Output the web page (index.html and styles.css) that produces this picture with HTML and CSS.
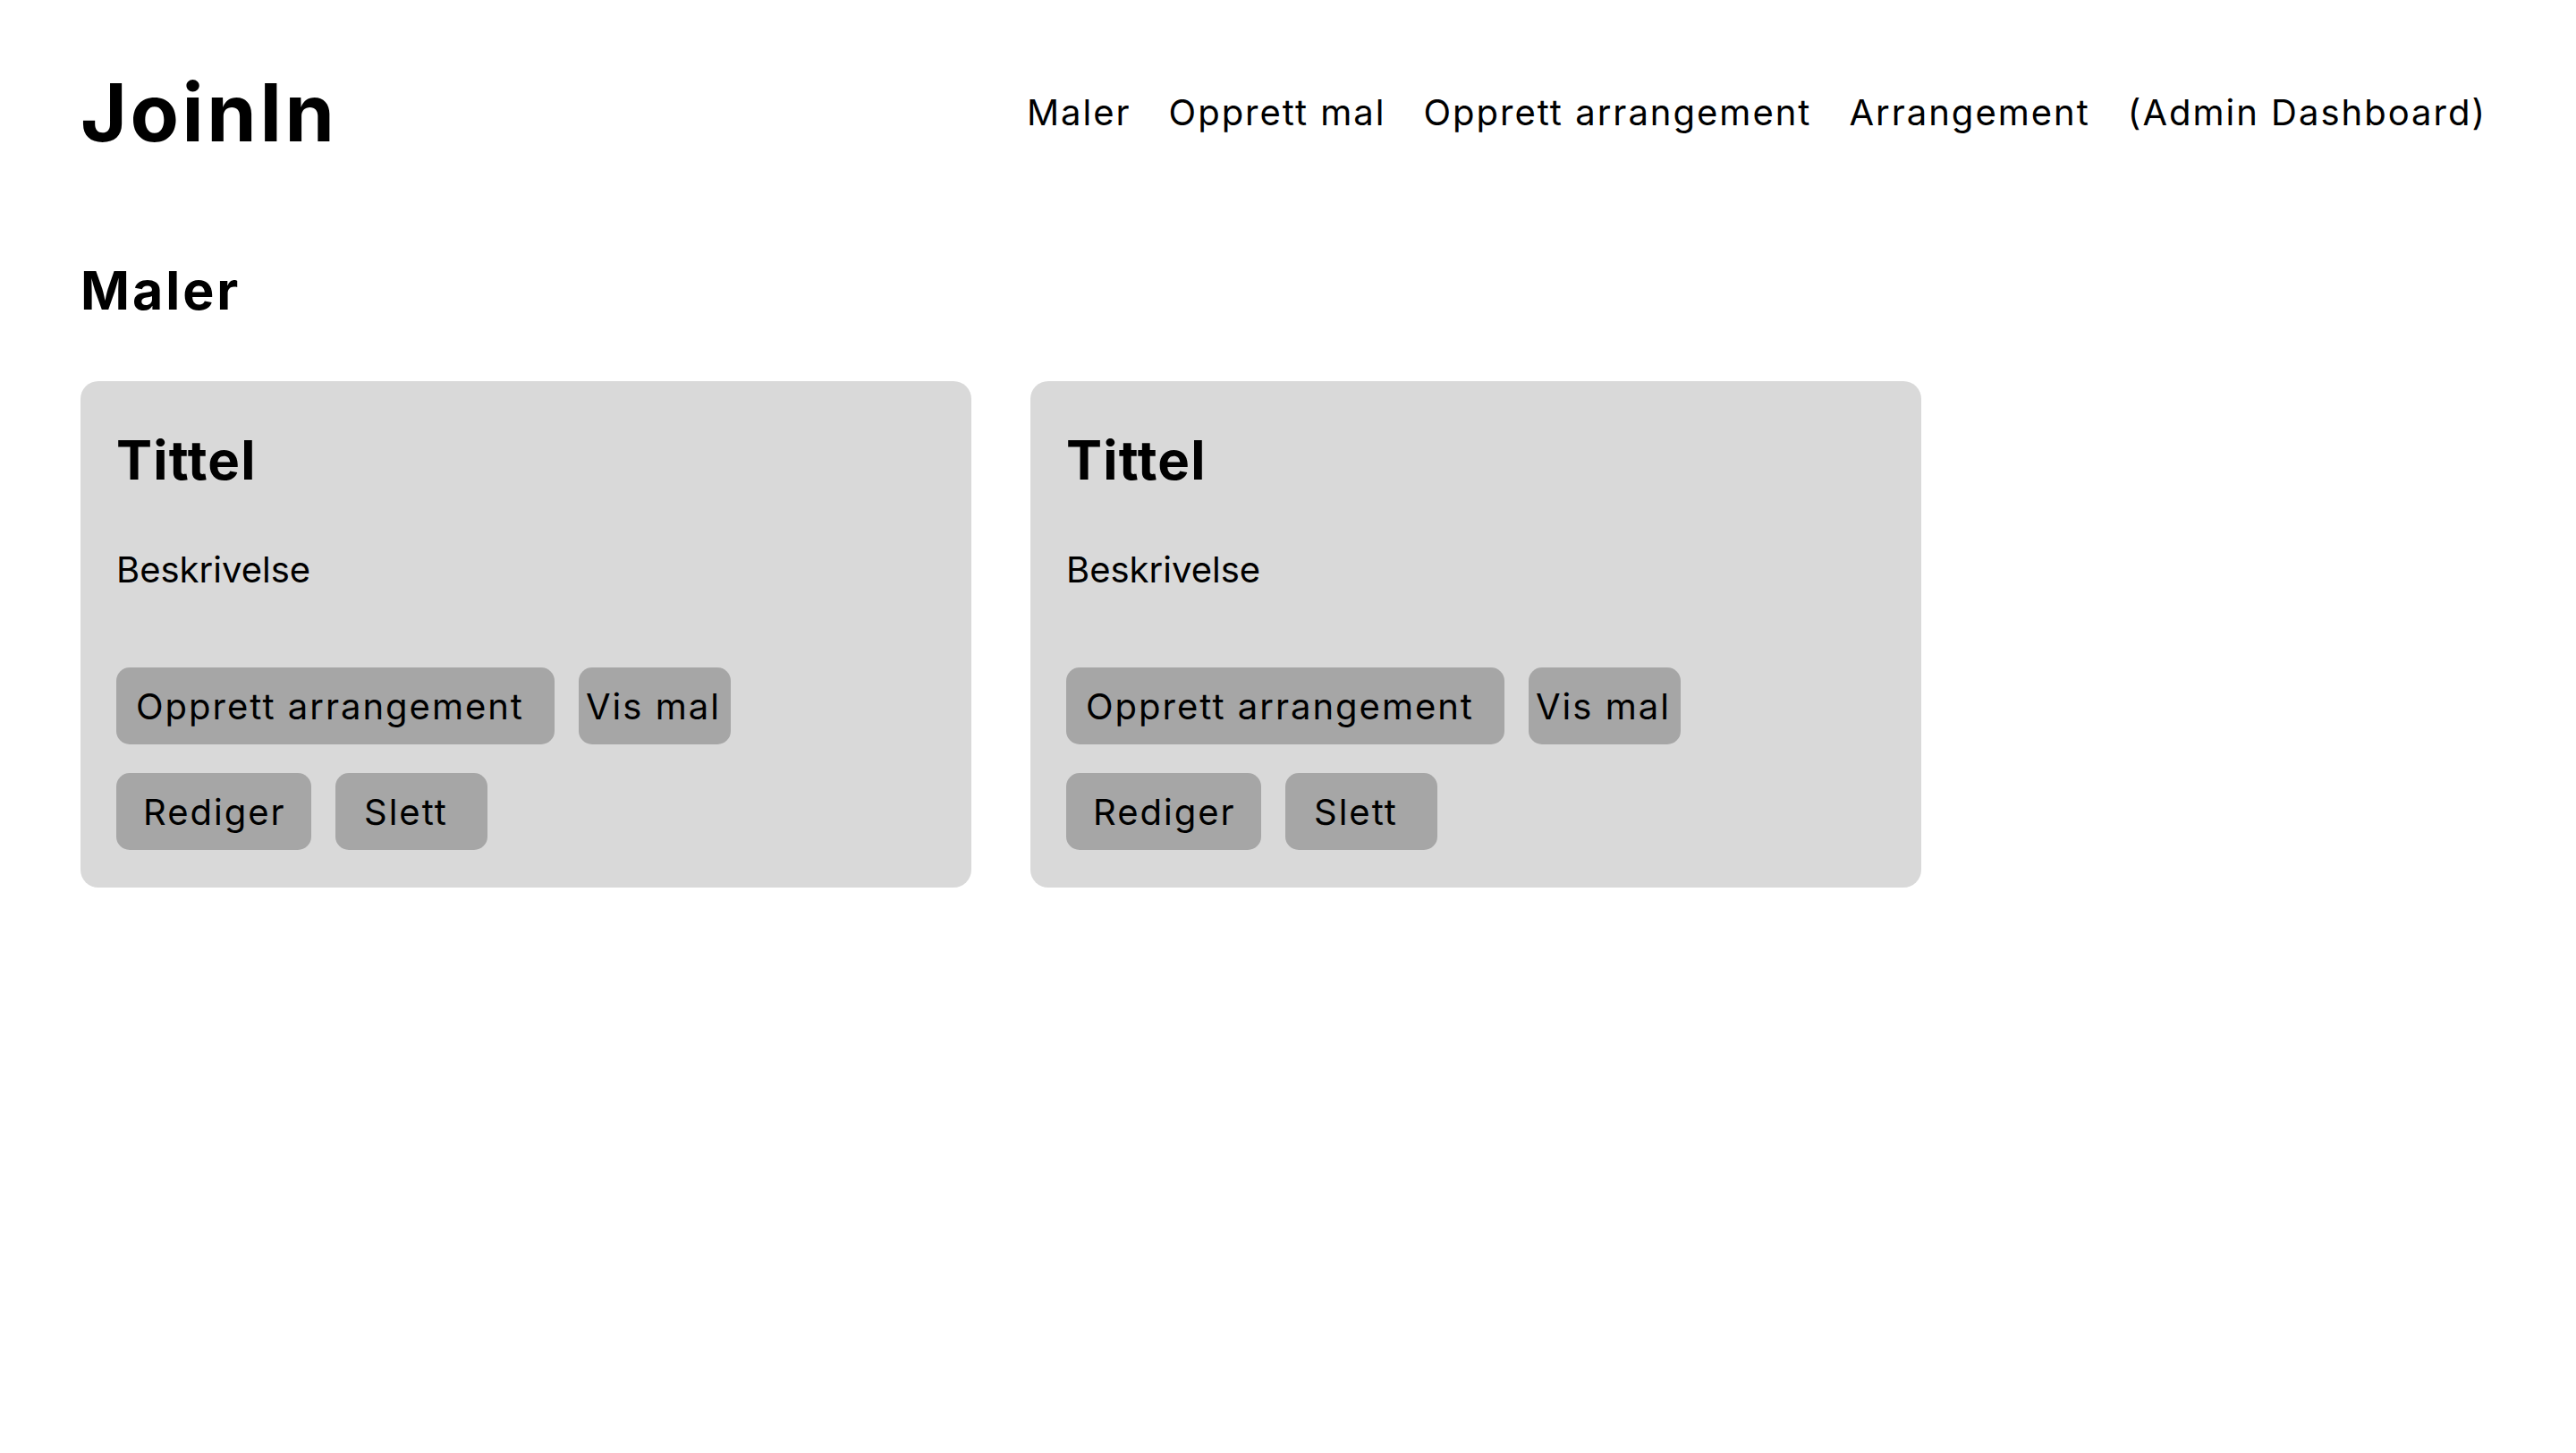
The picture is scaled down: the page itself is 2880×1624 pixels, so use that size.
FILE: index.html
```html
<!DOCTYPE html>
<html lang="no">
<head>
<meta charset="utf-8">
<title>JoinIn – Maler</title>
<link rel="stylesheet" href="styles.css">
</head>
<body>
<header class="header">
  <div class="logo">JoinIn</div>
  <nav class="nav">
    <a class="nav-link" href="#">Maler</a>
    <a class="nav-link" href="#">Opprett mal</a>
    <a class="nav-link" href="#">Opprett arrangement</a>
    <a class="nav-link" href="#">Arrangement</a>
    <a class="nav-link" href="#">(Admin Dashboard)</a>
  </nav>
</header>
<main class="main">
  <h1 class="page-title">Maler</h1>
  <div class="cards">
    <section class="card">
      <h2 class="card-title">Tittel</h2>
      <p class="card-desc">Beskrivelse</p>
      <div class="actions">
        <button class="btn btn-create">Opprett arrangement</button>
        <button class="btn btn-view">Vis mal</button>
        <button class="btn btn-edit">Rediger</button>
        <button class="btn btn-delete">Slett</button>
      </div>
    </section>
    <section class="card">
      <h2 class="card-title">Tittel</h2>
      <p class="card-desc">Beskrivelse</p>
      <div class="actions">
        <button class="btn btn-create">Opprett arrangement</button>
        <button class="btn btn-view">Vis mal</button>
        <button class="btn btn-edit">Rediger</button>
        <button class="btn btn-delete">Slett</button>
      </div>
    </section>
  </div>
</main>
</body>
</html>
```
FILE: styles.css
```css
* { box-sizing: border-box; }

html, body {
  margin: 0;
  background: #ffffff;
  color: #000000;
  font-family: Inter, "Noto Sans", sans-serif;
}

.header {
  display: flex;
  align-items: center;
  justify-content: space-between;
  padding: 81px 100px 0 90px;
}

.logo {
  font-size: 89px;
  line-height: 1;
  font-weight: 700;
  letter-spacing: 3.5px;
}

.nav {
  display: flex;
  align-items: center;
  gap: 42px;
}

.nav-link {
  color: #000000;
  text-decoration: none;
  font-size: 40px;
  line-height: 1;
  letter-spacing: 0.05em;
}

.main {
  padding: 125px 90px 0 90px;
}

.page-title {
  margin: 0;
  font-size: 59px;
  line-height: 1;
  font-weight: 700;
  letter-spacing: 3px;
}

.cards {
  display: flex;
  gap: 66px;
  margin-top: 72px;
}

.card {
  width: 996px;
  background: #d9d9d9;
  border-radius: 20px;
  padding: 58px 40px 42px 40px;
}

.card-title {
  margin: 0;
  font-size: 60px;
  line-height: 1;
  font-weight: 700;
  letter-spacing: 1.2px;
}

.card-desc {
  margin: 73px 0 0 0;
  font-size: 40px;
  line-height: 1;
  letter-spacing: 0;
}

.actions {
  display: flex;
  flex-wrap: wrap;
  column-gap: 27px;
  row-gap: 32px;
  margin-top: 89px;
}

.btn {
  display: flex;
  align-items: center;
  height: 86px;
  border: 0;
  border-radius: 15px;
  background: #a6a6a6;
  color: #000000;
  font-family: inherit;
  font-size: 40px;
  letter-spacing: 0.05em;
  text-align: left;
  white-space: nowrap;
  padding: 0;
}

.btn-create { width: 490px; padding-left: 22px; }
.btn-view   { width: 170px; padding-left: 8px; }
.btn-edit   { width: 218px; padding-left: 30px; }
.btn-delete { width: 170px; padding-left: 32px; }
```
